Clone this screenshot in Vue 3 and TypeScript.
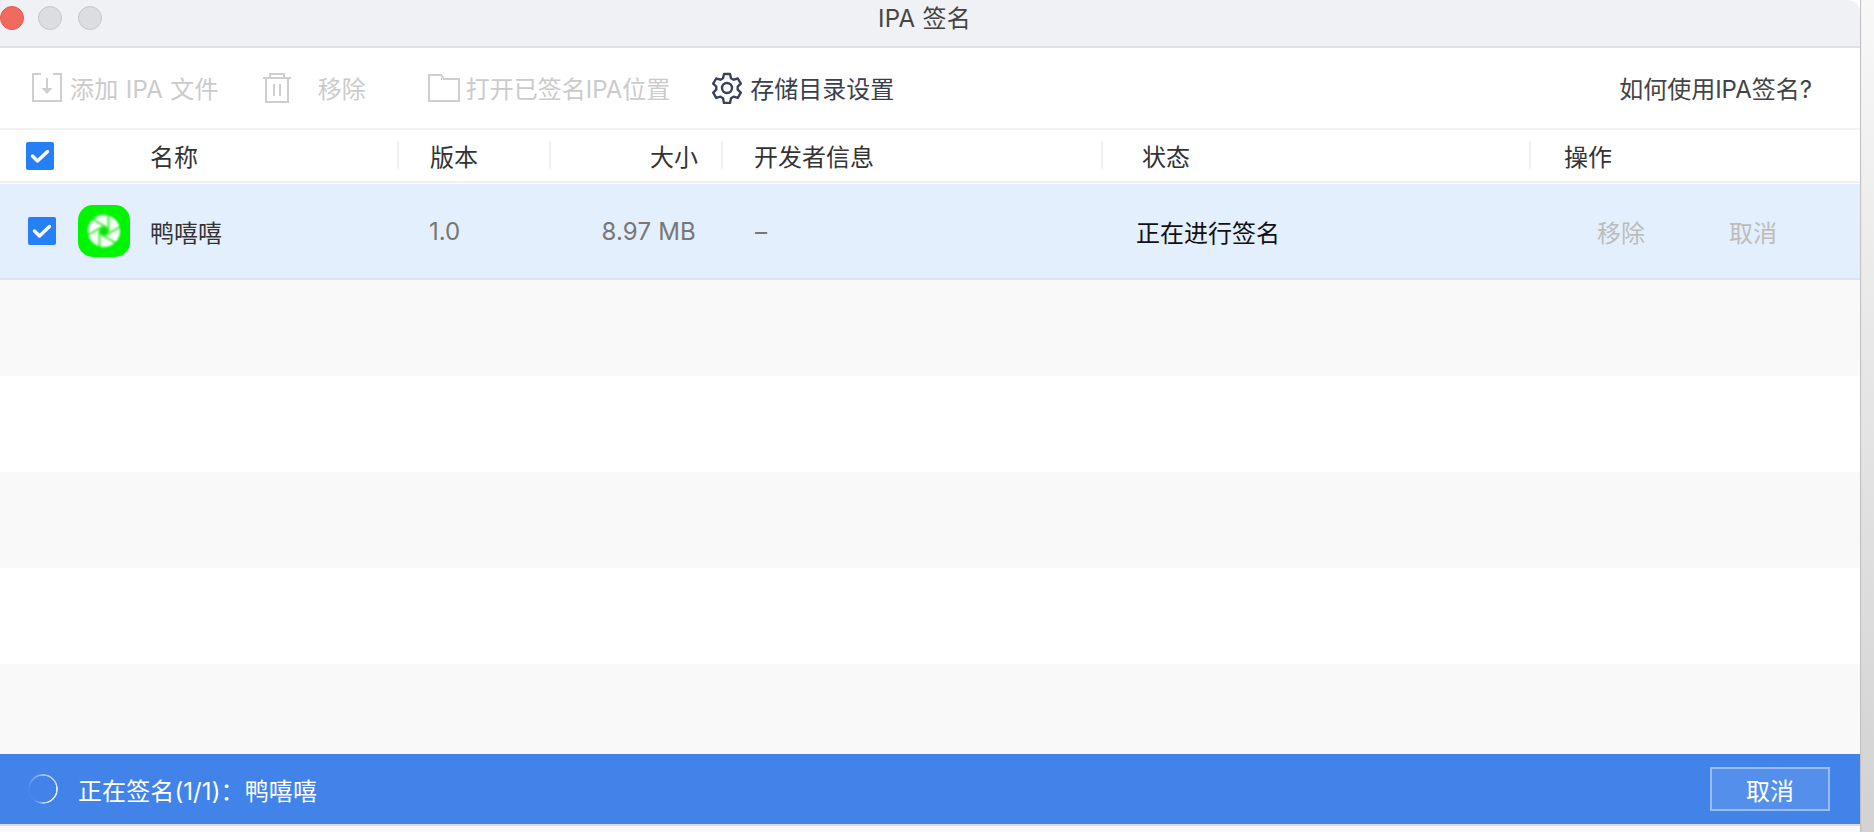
<script setup lang="ts">
const blades: number[] = [0, 60, 120, 180, 240, 300]
</script>

<template>
  <div class="page">
    <div class="window">
      <header class="titlebar">
        <span class="light red"></span>
        <span class="light grey first"></span>
        <span class="light grey second"></span>
        <span class="title">IPA 签名</span>
      </header>

      <nav class="toolbar">
        <button class="tool off add">
          <svg width="30" height="30" viewBox="0 0 30 30" fill="none" stroke="#cfcfcf" stroke-width="2">
            <path d="M9 1H1v27h28V1h-8" />
            <path d="M15 5v15" />
            <path d="M9.500 15h11L15 21z" fill="#cfcfcf" stroke="none" />
          </svg>
          <span class="tool-label wide">添加 IPA 文件</span>
        </button>
        <button class="tool off remove">
          <svg width="28" height="30" viewBox="0 0 28 30" fill="none" stroke="#cfcfcf" stroke-width="2">
            <path d="M0 5h28M7 5V1h14v4M3 5v24h22V5M11 11v12M17 11v12" />
          </svg>
          <span class="tool-label">移除</span>
        </button>
        <button class="tool off open">
          <svg width="32" height="28" viewBox="0 0 32 28" fill="none" stroke="#cfcfcf" stroke-width="2">
            <path d="M1 27V1h12l3 4h15v22zM14 5h-1" />
          </svg>
          <span class="tool-label">打开已签名IPA位置</span>
        </button>
        <button class="tool settings">
          <svg width="32" height="32" viewBox="0 0 32 32" fill="none" stroke="#39425a" stroke-width="2.400" stroke-linejoin="round">
            <path d="M13 2h6l1 4.200 2.600 1.500 4.200-1.200 3 5.200-3.100 3 0 3 3.100 3-3 5.200-4.200-1.200-2.600 1.500-1 4.800h-6l-1-4.800-2.600-1.500-4.200 1.200-3-5.200 3.100-3 0-3-3.100-3 3-5.200 4.200 1.200 2.600-1.500z" />
            <circle cx="16" cy="16" r="5" />
          </svg>
          <span class="tool-label">存储目录设置</span>
        </button>
        <a class="help">如何使用IPA签名?</a>
      </nav>

      <div class="thead">
        <div class="th col-name">
          <span class="check head-check">
            <svg width="20" height="16" viewBox="0 0 20 16" fill="none"><path d="M2.500 8l5 5 10-9.500" stroke="#fff" stroke-width="3.400" stroke-linecap="round" stroke-linejoin="round" /></svg>
          </span>
          <span class="name-head">名称</span>
        </div>
        <div class="th col-ver"><span class="sep"></span><span class="ver-head">版本</span></div>
        <div class="th col-size"><span class="sep"></span><span class="size-head">大小</span></div>
        <div class="th col-dev"><span class="sep"></span><span class="dev-head">开发者信息</span></div>
        <div class="th col-status"><span class="sep"></span><span class="status-head">状态</span></div>
        <div class="th col-ops"><span class="sep"></span><span class="ops-head">操作</span></div>
      </div>

      <div class="tbody">
        <div class="row selected">
          <div class="td col-name">
            <span class="check row-check">
              <svg width="20" height="16" viewBox="0 0 20 16" fill="none"><path d="M2.500 8l5 5 10-9.500" stroke="#fff" stroke-width="3.400" stroke-linecap="round" stroke-linejoin="round" /></svg>
            </span>
            <span class="app-icon">
              <svg class="aperture" width="34" height="34" viewBox="-17 -17 34 34">
                <circle r="16" fill="#fff" />
                <circle r="4.500" fill="#06e806" />
                <path v-for="a in blades" :key="a" d="M4.500 0V-17" stroke="#06e806" stroke-width="1.600" :transform="`rotate(${a})`" />
              </svg>
            </span>
            <span class="app-name">鸭嘻嘻</span>
          </div>
          <div class="td col-ver ver-val">1.0</div>
          <div class="td col-size size-val">8.97 MB</div>
          <div class="td col-dev dev-val">–</div>
          <div class="td col-status status-val">正在进行签名</div>
          <div class="td col-ops ops-val"><span>移除</span><span>取消</span></div>
        </div>
        <div class="stripe even"></div>
        <div class="stripe"></div>
        <div class="stripe even"></div>
        <div class="stripe"></div>
        <div class="stripe even fill"></div>
      </div>

      <footer class="statusbar">
        <span class="spinner"></span>
        <span class="progress">正在签名(1/1)：鸭嘻嘻</span>
        <button class="cancel">取消</button>
      </footer>
      <div class="bottom-edge"></div>
    </div>
    <div class="side-strip"></div>
  </div>
</template>

<style>
html, body { margin: 0; background: #f6f6f6; }
</style>

<style scoped>
.page {
  display: flex;
  width: 1874px;
  height: 832px;
  overflow: hidden;
  font-family: "Inter", "Noto Sans CJK SC", sans-serif;
  font-size: 24px;
  color: #333;
  background: #fff;
}
.window {
  width: 1860px;
  display: flex;
  flex-direction: column;
  border-top-right-radius: 12px;
  overflow: hidden;
  background: #fff;
}
.side-strip {
  flex: 1;
  background: linear-gradient(#f8f8f8, #ececec 30%, #d2d2d2);
  box-shadow: inset 2px 0 1px -1px #bdbdbd;
}
.titlebar {
  flex: none;
  display: flex;
  align-items: center;
  padding-bottom: 10px;
  height: 36px;
  background: #eff1f5;
  border-bottom: 2px solid #dfe0e2;
}
.light {
  width: 24px;
  height: 24px;
  box-sizing: border-box;
  border-radius: 50%;
  flex: none;
}
.red { background: #f2695f; border: 1px solid #de5d52; }
.grey { background: #dcdde0; border: 1px solid #c6c7c9; }
.first { margin-left: 14px; }
.second { margin-left: 16px; }
.title {
  margin-left: 776px;
  margin-bottom: 3px;
  font-size: 24px;
  letter-spacing: 0.3px;
  color: #444;
}
.toolbar {
  height: 80px;
  flex: none;
  display: flex;
  align-items: center;
  border-bottom: 2px solid #f2f2f2;
}
.tool {
  display: flex;
  align-items: center;
  padding: 0;
  border: 0;
  background: none;
  font: inherit;
  color: #39404d;
}
.tool-label { white-space: nowrap; margin-bottom: 2px; }
.off { color: #cbcbcb; }
.add { margin-left: 32px; gap: 8px; }
.wide { letter-spacing: 0.3px; }
.remove { margin-left: 44px; gap: 27px; }
.open { margin-left: 62px; gap: 6px; }
.settings { margin-left: 41px; gap: 7px; }
.help { margin-left: auto; margin-right: 48px; margin-bottom: 2px; color: #444; }

.thead {
  height: 51px;
  flex: none;
  display: grid;
  grid-template-columns: 397px 152px 172px 380px 428px 331px;
  border-bottom: 2px solid #f0f0f0;
  margin-bottom: 1px;
}
.th {
  position: relative;
  display: flex;
  align-items: center;
}
.sep {
  position: absolute;
  left: 0;
  top: 11px;
  width: 2px;
  height: 28px;
  background: #f0f0f0;
}
.check {
  width: 28px;
  height: 28px;
  flex: none;
  display: flex;
  align-items: center;
  justify-content: center;
  border-radius: 2px;
  background: #2680f5;
}
.head-check { margin-left: 26px; }
.name-head { margin-left: 96px; }
.ver-head { margin-left: 33px; }
.size-head { margin-left: auto; margin-right: 23px; }
.dev-head { margin-left: 33px; }
.status-head { margin-left: 41px; }
.ops-head { margin-left: 35px; }

.tbody {
  flex: 1;
  display: flex;
  flex-direction: column;
  min-height: 0;
}
.row {
  height: 96px;
  box-sizing: border-box;
  flex: none;
  display: grid;
  grid-template-columns: 397px 152px 172px 380px 428px 331px;
  background: #e3effc;
  border-bottom: 2px solid #dbe5f0;
}
.td { display: flex; align-items: center; }
.row-check { margin-left: 28px; }
.app-icon {
  width: 52px;
  height: 52px;
  margin-left: 22px;
  flex: none;
  display: flex;
  align-items: center;
  justify-content: center;
  border-radius: 15px;
  background: #00f500;
}
.aperture { filter: blur(0.8px); }
.app-name { margin-left: 20px; color: #333; }
.ver-val { padding-left: 32px; color: #777; }
.size-val { justify-content: flex-end; padding-right: 25px; color: #777; letter-spacing: 0.2px; }
.dev-val { padding-left: 34px; color: #777; }
.status-val { padding-left: 35px; color: #111; }
.ops-val { padding-left: 68px; gap: 84px; color: #bcbcbc; }

.stripe { height: 96px; flex: none; background: #fff; }
.even { background: #f9f9f9; }
.fill { flex: 1; height: auto; }

.statusbar {
  height: 70px;
  flex: none;
  display: flex;
  align-items: center;
  background: #4283ea;
  color: #fff;
}
.spinner {
  width: 30px;
  height: 30px;
  margin-left: 28px;
  flex: none;
  border-radius: 50%;
  background: conic-gradient(from 270deg, rgba(255,255,255,.03), rgba(255,255,255,.5) 90deg, rgba(255,255,255,.8) 180deg, rgba(255,255,255,.9) 240deg, rgba(255,255,255,.03) 310deg);
  -webkit-mask: radial-gradient(circle, transparent 13px, #000 13.500px);
  mask: radial-gradient(circle, transparent 13px, #000 13.500px);
}
.progress { margin-left: 20px; letter-spacing: 0.1px; }
.cancel {
  width: 120px;
  height: 44px;
  margin-left: auto;
  margin-right: 30px;
  box-sizing: border-box;
  border: 2px solid rgba(255,255,255,.4);
  background: rgba(255,255,255,.1);
  color: #fff;
  font: inherit;
  padding: 0;
}
.bottom-edge {
  height: 8px;
  flex: none;
  box-sizing: border-box;
  background: #f8f8f8;
  border-top: 2px solid #dcdcdc;
}
</style>
